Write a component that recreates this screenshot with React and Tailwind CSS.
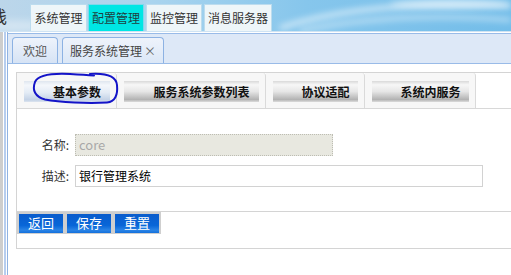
import React from 'react';

const menus = [
  { label: '系统管理', w: 'w-[57px]', ml: 'ml-0', active: false },
  { label: '配置管理', w: 'w-[56px]', ml: 'ml-[1px]', active: true },
  { label: '监控管理', w: 'w-[56px]', ml: 'ml-[2px]', active: false },
  { label: '消息服务器', w: 'w-[68px]', ml: 'ml-[2px]', active: false },
];

const subTabs = [
  { label: '基本参数', w: 'w-[100px]', active: true },
  { label: '服务系统参数列表', w: 'w-[149px]', active: false },
  { label: '协议适配', w: 'w-[99px]', active: false },
  { label: '系统内服务', w: 'w-[111px]', active: false },
];

function Header() {
  return (
    <div className="relative h-[31px] flex items-end overflow-hidden bg-[linear-gradient(to_right,#bcd6ea_0%,#a9d4ee_30%,#86c6ec_60%,#73bde9_100%)]">
      <svg className="absolute inset-0" width="511" height="31" viewBox="0 0 511 31">
        <defs>
          <filter id="blur" x="-20%" y="-50%" width="140%" height="200%">
            <feGaussianBlur stdDeviation="3" />
          </filter>
        </defs>
        <path d="M280 28 C340 8, 420 2, 511 6" stroke="#ffffff" strokeOpacity="0.6" strokeWidth="5" fill="none" filter="url(#blur)" />
        <path d="M300 31 C360 18, 430 14, 511 20" stroke="#ffffff" strokeOpacity="0.5" strokeWidth="4" fill="none" filter="url(#blur)" />
        <ellipse cx="450" cy="4" rx="60" ry="5" fill="#ffffff" fillOpacity="0.45" filter="url(#blur)" />
        <ellipse cx="15" cy="26" rx="40" ry="6" fill="#ffffff" fillOpacity="0.35" filter="url(#blur)" />
      </svg>
      <div className="relative w-[30px] h-full overflow-hidden flex items-center">
        <span className="-ml-[10px] text-[17px] leading-none text-[#333]">栈</span>
      </div>
      <div className="relative flex items-end">
        {menus.map((m) => (
          <div
            key={m.label}
            className={`${m.w} ${m.ml} h-[27px] flex items-center justify-center border border-b-0 text-[12px] ${
              m.active ? 'bg-[#00e6e4] border-[#7fd8ea] text-[#1f3f3f]' : 'bg-[#eef6f9] border-[#bcdcee] text-[#333]'
            }`}
          >
            {m.label}
          </div>
        ))}
      </div>
    </div>
  );
}

function SideStrip() {
  return (
    <div className="flex h-full shrink-0">
      <div className="w-[3px] bg-[#cdcdcd]" />
      <div className="w-[1px] bg-white" />
      <div className="w-[2px] bg-[#b7cdee]" />
      <div className="w-[1px] bg-white" />
      <div className="w-[1px] bg-[#8fb2e2]" />
    </div>
  );
}

// hand-drawn marker circle over the first sub tab
function Scribble() {
  return (
    <svg className="absolute left-[30px] top-[70px] pointer-events-none" width="92" height="38" viewBox="0 0 92 38">
      <path
        d="M60 4 C75 3, 86 6, 87 15 C88 25, 85 32, 77 32.5 C58 33.5, 30 32.5, 15 29.5 C5 27, 2 20, 5 12 C8 5, 20 3, 40 4 C50 4.5, 58 5, 64 5.5"
        fill="none"
        stroke="#1414c8"
        strokeWidth="2"
        strokeLinecap="round"
      />
    </svg>
  );
}

export default function App() {
  return (
    <div className="relative w-[511px] h-[275px] overflow-hidden bg-white font-['Noto_Sans_CJK_SC','Liberation_Sans',sans-serif] text-[12px]">
      <Header />
      <div className="flex h-[244px] border-t border-[#cfe3f3]">
        <SideStrip />
        <div className="flex-1 flex flex-col">
          <div className="mt-[1px] h-[31px] bg-[#dde8f7] border-t border-b border-[#99bbe8] flex items-end pl-[4px] gap-[4px]">
            <div className="w-[46px] h-[26px] rounded-t-[4px] border border-b-0 border-[#8db2e3] bg-[linear-gradient(to_bottom,#eef3fb,#d6e3f5)] flex items-center justify-center text-[#555] text-[12px]">
              欢迎
            </div>
            <div className="w-[102px] h-[26px] rounded-t-[4px] border border-b-0 border-[#8db2e3] bg-[linear-gradient(to_bottom,#eef3fb,#dbe7f7)] flex items-center justify-center text-[#444] text-[12px]">
              服务系统管理 <span className="ml-[2px] text-[#666]">×</span>
            </div>
          </div>
          <div className="pl-[8px] pt-[8px]">
            <div className="border-l border-t border-b border-[#d4d4d4]">
              <div className="flex h-[36px] border-b border-[#d8d8d8]">
                {subTabs.map((t) => (
                  <div key={t.label} className={`${t.w} h-[35px] border-r border-[#dadada] rounded-tr-[3px] bg-[#f7f7f7] pl-[7px] pr-[6px] pt-[8px]`}>
                    <div
                      className={`h-[21px] flex items-center justify-center pl-[20px] font-bold text-[12px] text-[#111] ${
                        t.active
                          ? 'bg-[linear-gradient(to_bottom,#dfe6ef_0%,#f4f7fb_20%,#e3ebf5_55%,#c3d2e6_90%,#dde5ef_100%)]'
                          : 'bg-[linear-gradient(to_bottom,#d9d9d9_0%,#f7f7f7_18%,#e6e6e6_50%,#b3b3b3_88%,#dcdcdc_100%)]'
                      }`}
                    >
                      {t.label}
                    </div>
                  </div>
                ))}
              </div>
              <div className="pt-[25px] pb-[24px] flex flex-col gap-[9px]">
                <div className="flex items-center">
                  <div className="w-[52px] text-right text-[#333]">名称:</div>
                  <div className="ml-[6px] w-[258px] h-[22px] bg-[#e8e8e0] border border-dotted border-[#bdbdb3] flex items-center pl-[3px] text-[13px] text-[#a8a8a8]">
                    core
                  </div>
                </div>
                <div className="flex items-center">
                  <div className="w-[52px] text-right text-[#333]">描述:</div>
                  <div className="ml-[6px] w-[408px] h-[22px] border border-[#d2d2d2] flex items-center pl-[3px] text-[12px] text-black">
                    银行管理系统
                  </div>
                </div>
              </div>
              <div className="border-t border-[#d4d4d4] pb-[14px]">
                <div className="w-[144px] h-[22px] bg-[#cfcfcf] flex items-center gap-[4px] px-[2px]">
                  {['返回', '保存', '重置'].map((b) => (
                    <div
                      key={b}
                      className="w-[44px] h-[19px] flex items-center justify-center text-white text-[13px] bg-[linear-gradient(to_bottom,#0a5ccc_0%,#0866d8_60%,#2a84e6_85%,#1470dc_100%)]"
                    >
                      {b}
                    </div>
                  ))}
                </div>
              </div>
            </div>
          </div>
        </div>
      </div>
      <Scribble />
    </div>
  );
}
